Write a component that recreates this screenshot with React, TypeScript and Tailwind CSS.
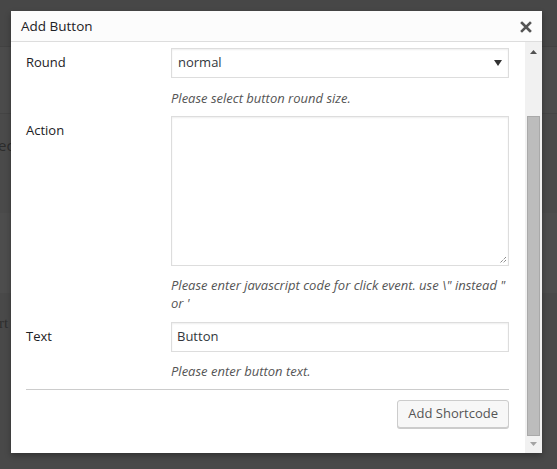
// "Add Button" shortcode dialog over a dimmed admin page.
import { ReactNode } from "react";

const FONT = "font-['Open_Sans',_'Noto_Sans',_sans-serif]";

function Row({ label, children }: { label: string; children: ReactNode }) {
  return (
    <div className="flex">
      <div className="w-[145px] shrink-0 pt-[5px] text-[13px] leading-[18px] font-medium text-[#1d2125]">
        {label}
      </div>
      <div className="flex-1">{children}</div>
    </div>
  );
}

function Help({ children }: { children: ReactNode }) {
  return (
    <p className="mt-[10px] text-[13px] leading-[18px] italic text-[#555]">{children}</p>
  );
}

function Backdrop() {
  // what is left visible of the page under the overlay
  return (
    <div className="flex h-full flex-col font-['Liberation_Serif',_serif] text-[15px] text-[#2e2e2e]">
      <div className="h-[46px] bg-[#474747]" />
      <div className="h-[67px] border-t border-[#424242] bg-[#4b4b4b]" />
      <div className="flex h-[100px] items-start border-t border-[#444] bg-[#4a4a4a] pt-[20px]">
        <span className="-ml-[2px] font-['Open_Sans',_sans-serif] text-[#2c2c2c]">ec</span>
      </div>
      <div className="h-[80px] bg-[#4d4d4d]" />
      <div className="flex flex-1 flex-col bg-[#494949] pt-[19px]">
        <span className="-ml-[1px]">rt</span>
      </div>
    </div>
  );
}

export default function App() {
  return (
    <div className={`relative h-[469px] w-[557px] overflow-hidden bg-[#474747] ${FONT}`}>
      <Backdrop />

      <div className="absolute top-[11px] left-[11px] flex h-[442px] w-[531px] flex-col bg-white shadow-[0_3px_6px_rgba(0,0,0,0.3)]">
        <div className="flex h-[31px] shrink-0 items-center justify-between border-b border-[#dddddd] bg-[#fcfcfc] pr-[10px] pl-[10px]">
          <span className="text-[13.5px] text-[#1d2125]">Add Button</span>
          <svg width="12" height="12" viewBox="0 0 12 12" className="mt-[1px]">
            <path d="M2 2 L10 10 M10 2 L2 10" stroke="#555" strokeWidth="2.6" strokeLinecap="square" />
          </svg>
        </div>

        <div className="flex min-h-0 flex-1">
          <div className="flex flex-1 flex-col pt-[6px] pr-[16px] pl-[15px]">
            <Row label="Round">
              <div className="flex h-[30px] items-center justify-between border border-[#dddddd] bg-white pr-[6px] pl-[6px] text-[13px] text-[#32373c] shadow-[inset_0_1px_2px_rgba(0,0,0,0.07)]">
                <span>normal</span>
                <svg width="8" height="6" viewBox="0 0 8 6">
                  <path d="M0 0 H8 L4 6 Z" fill="#333" />
                </svg>
              </div>
              <p className="mt-[11px] text-[13px] leading-[18px] italic text-[#555]">
                Please select button round size.
              </p>
            </Row>

            <div className="mt-[9px]">
              <Row label="Action">
                <div className="relative h-[150px] border border-[#dddddd] bg-white shadow-[inset_0_1px_2px_rgba(0,0,0,0.07)]">
                  <svg width="8" height="8" viewBox="0 0 8 8" className="absolute right-[1px] bottom-[1px]">
                    <path d="M7 1 L1 7 M7 4 L4 7" stroke="#555" strokeWidth="1" strokeDasharray="1 1" />
                  </svg>
                </div>
                <Help>
                  Please enter javascript code for click event. use \" instead " or '
                </Help>
              </Row>
            </div>

            <div className="mt-[10px]">
              <Row label="Text">
                <div className="flex h-[30px] items-center border border-[#dddddd] bg-white pl-[5px] text-[13px] text-[#32373c] shadow-[inset_0_1px_2px_rgba(0,0,0,0.07)]">
                  Button
                </div>
                <Help>Please enter button text.</Help>
              </Row>
            </div>

            <div className="mt-[9px] border-t border-[#cccccc]" />

            <div className="mt-[10px] flex justify-end">
              <button className="h-[28px] rounded-[3px] border border-[#cccccc] bg-[#f7f7f7] px-[10px] text-[13px] text-[#555] shadow-[0_1px_0_#cccccc]">
                Add Shortcode
              </button>
            </div>
          </div>

          <div className="flex w-[17px] shrink-0 flex-col items-center bg-[#f1f1f1]">
            <svg width="7" height="4" viewBox="0 0 7 4" className="mt-[8px]">
              <path d="M0 4 L3.5 0 L7 4 Z" fill="#505050" />
            </svg>
            <div className="mt-[62px] h-[320px] w-[13px] border border-[#a9a9a9] bg-[#bcbcbc]" />
            <svg width="7" height="4" viewBox="0 0 7 4" className="mt-[6px]">
              <path d="M0 0 H7 L3.5 4 Z" fill="#a3a3a3" />
            </svg>
          </div>
        </div>
      </div>
    </div>
  );
}
